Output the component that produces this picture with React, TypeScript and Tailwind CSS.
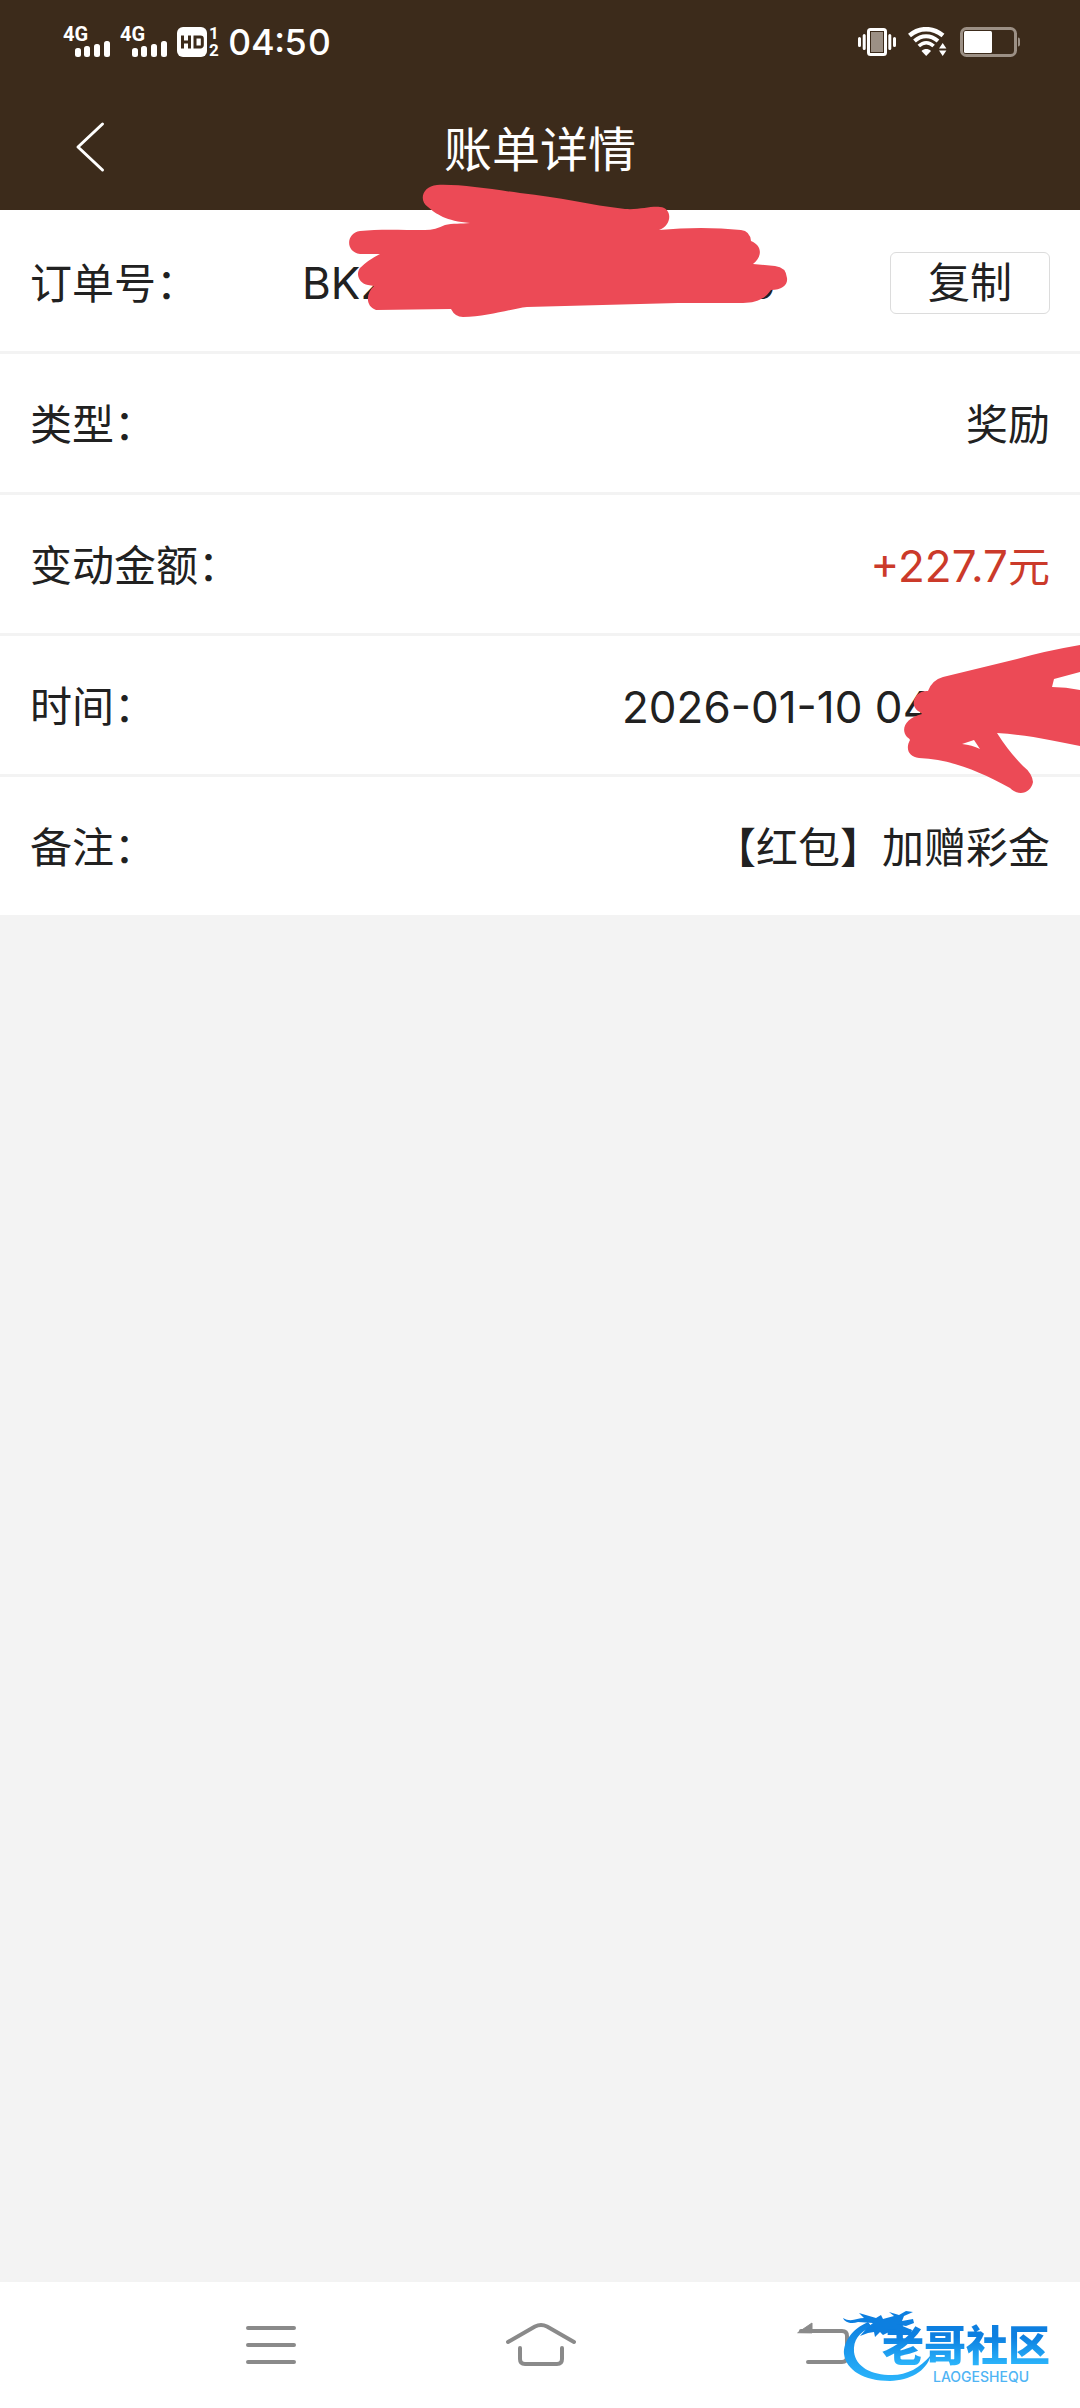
import React from "react";

function Signal() {
  return (
    <svg viewBox="0 -8 48 48" className="h-12 w-12" fill="#fff" aria-label="4G signal">
      <text x="0" y="15" fontFamily="Roboto, sans-serif" fontWeight="700" fontSize="20">
        4G
      </text>
      <rect x="12" y="22" width="6" height="9" rx="2.5" />
      <rect x="21" y="20" width="6" height="11" rx="2.5" />
      <rect x="31" y="18" width="6" height="13" rx="2.5" />
      <rect x="41" y="15" width="6" height="16" rx="2.5" />
    </svg>
  );
}

function HdBadge() {
  return (
    <svg viewBox="0 -8 44 48" className="h-12 w-11" aria-label="HD 1 2">
      <rect x="0" y="1" width="30" height="30" rx="6" fill="#fff" />
      <g fill="none" stroke="#3c2b1b" strokeWidth="3">
        <path d="M5.5 9.5v13M12.5 9.5v13M5.5 16h7" />
        <path d="M18 11h5.5a1.8 1.8 0 0 1 1.8 1.8v6.4a1.8 1.8 0 0 1-1.8 1.8H18z" />
      </g>
      <g fill="#fff" fontFamily="Roboto, sans-serif" fontWeight="700" fontSize="17">
        <text x="32" y="13">1</text>
        <text x="32" y="30">2</text>
      </g>
    </svg>
  );
}

function Vibrate() {
  return (
    <svg viewBox="0 0 38 30" className="h-[30px] w-[38px]" aria-label="Vibrate">
      <rect x="10.5" y="2.5" width="17" height="25" rx="2" fill="#9c9085" stroke="#fff" strokeWidth="3" />
      <rect x="12.5" y="4.5" width="13" height="21" fill="none" stroke="#3c2b1b" strokeWidth="1" />
      <g stroke="#fff" strokeWidth="3" strokeLinecap="round">
        <path d="M1.5 11.5v7M6.2 8.5v13M31.8 8.5v13M36.5 11.5v7" />
      </g>
    </svg>
  );
}

function Wifi() {
  return (
    <svg viewBox="0 0 40 30" className="h-[30px] w-10" fill="none" stroke="#fff" aria-label="Wi-Fi">
      <path d="M1.5 8.5C11.5 0 24.5 0 35 8.5" strokeWidth="4.5" />
      <path d="M6.5 14C13.5 7.6 22.5 7.6 30 14" strokeWidth="4" />
      <path d="M10.8 19C15.5 14.6 21 14.6 25.6 19" strokeWidth="3.6" />
      <path d="M13.5 24C16.5 21.4 20 21.4 23 24L18.2 29z" fill="#fff" stroke="none" />
      <path d="M31 21.5l3.7-5.5 3.7 5.5zM31 23.5l3.7 5.5 3.7-5.5z" fill="#fff" stroke="none" />
    </svg>
  );
}

function Battery() {
  return (
    <svg viewBox="0 0 60 30" className="h-[30px] w-[60px]" aria-label="Battery">
      <rect x="1.5" y="1.5" width="54" height="27" rx="5" fill="none" stroke="#9c9085" strokeWidth="3" />
      <path d="M58 10.5a2 2 0 0 1 2 2v5a2 2 0 0 1-2 2z" fill="#9c9085" />
      <rect x="4" y="4" width="28" height="22" rx="1.5" fill="#fff" />
    </svg>
  );
}

function Row({ label, children }: { label: string; children: React.ReactNode }) {
  return (
    <div className="flex h-[141px] items-center justify-between border-b-[3px] border-[#f3f3f3] px-[30px] pt-[3px]">
      <dt>{label}</dt>
      <dd>{children}</dd>
    </div>
  );
}

function Logo() {
  return (
    <div className="pointer-events-none absolute right-4 bottom-5 h-[88px] w-[222px]">
      <svg viewBox="0 0 222 88" className="absolute inset-0 h-full w-full" aria-hidden="true">
        <defs>
          <linearGradient id="ring" x1="0" y1="0" x2="0" y2="1">
            <stop offset="0" stopColor="#0d7fe0" />
            <stop offset="1" stopColor="#2bb4fb" />
          </linearGradient>
        </defs>
        <path
          fill="url(#ring)"
          d="M26 22C10 29 1 42 2 54C4 70 22 81 48 81C68 80 84 72 89 55C78 68 65 75 50 75C29 75 14 67 12 52C11 40 17 32 30 27z"
        />
        <path
          fill="#0d7fe0"
          d="M1 18C9 23 15 18 22 18L17 13L34 18L39 15L41 19L52 16L47 12L57 15L64 11L71 12L62 16L60 21L71 19L72 23L64 26L58 25L70 30L69 33L58 31L47 32L41 35L38 32L33 37L32 32L26 33L18 36L26 27L31 23L16 22C10 24 3 23 1 18z"
        />
      </svg>
      <div className="absolute top-[23px] left-[40px] flex flex-col">
        <span className="bg-gradient-to-b from-[#0d7fe0] from-30% to-[#2bb4fb] to-90% bg-clip-text text-[42px] leading-[46px] font-black whitespace-nowrap text-transparent">
          老哥社区
        </span>
        <span className="pl-[51px] text-[14px] leading-4 font-medium text-[#4fb4f4]">LAOGESHEQU</span>
      </div>
    </div>
  );
}

export default function App() {
  return (
    <div className="relative flex min-h-screen flex-col bg-[#f3f3f3] font-['Inter','Noto_Sans_CJK_SC',sans-serif] text-[42px] text-[#212121]">
      <header className="bg-[#3c2b1b] text-white">
        <div className="flex h-[84px] items-center justify-between pr-[60px] pl-[63px]">
          <div className="flex items-center">
            <div className="flex items-center gap-[9px]">
              <Signal />
              <Signal />
              <HdBadge />
            </div>
            <time className="ml-[7px] text-[36px] leading-[42px] font-medium tabular-nums">04:50</time>
          </div>
          <div className="flex items-center gap-3">
            <Vibrate />
            <Wifi />
            <Battery />
          </div>
        </div>
        <div className="grid h-[126px] grid-cols-[1fr_auto_1fr] items-center">
          <button type="button" aria-label="返回" className="ml-[75px] w-8">
            <svg viewBox="0 0 32 52" className="h-[52px] w-8" fill="none" stroke="#fff" strokeWidth="3" strokeLinecap="round" strokeLinejoin="round">
              <path d="M27.5 3L3 26l24.5 23" />
            </svg>
          </button>
          <h1 className="pt-[5px] text-[48px] leading-[60px]">账单详情</h1>
        </div>
      </header>

      <dl className="bg-white">
        <div className="flex h-36 items-center border-b-[3px] border-[#f3f3f3] px-[30px] pt-[5px]">
          <dt className="w-[272px]">订单号：</dt>
          <dd className="flex flex-1 items-center justify-between">
            <span className="flex w-[474px] justify-between text-[44px]">
              <span>BK2</span>
              <span>0</span>
            </span>
            <button type="button" className="h-[62px] w-40 rounded-md border border-[#dcdcdc] leading-[60px]">
              复制
            </button>
          </dd>
        </div>
        <Row label="类型：">奖励</Row>
        <Row label="变动金额：">
          <span className="text-[#cb3a2a]">
            <span className="text-[44px]">+227.7</span>元
          </span>
        </Row>
        <Row label="时间：">
          <span className="block w-[428px] text-[44px]">2026-01-10 04</span>
        </Row>
        <Row label="备注：">【红包】加赠彩金</Row>
      </dl>

      <main className="flex-1" />

      <nav className="relative h-[126px] bg-white px-[12.5%]">
        <div className="grid h-full grid-cols-3 place-items-center text-[#8a8a8a]">
          <button type="button" aria-label="最近任务">
            <svg viewBox="0 0 90 60" className="h-[60px] w-[90px]" fill="none" stroke="currentColor" strokeWidth="4" strokeLinecap="round">
              <path d="M23 13h46M23 30h46M23 47h46" />
            </svg>
          </button>
          <button type="button" aria-label="主页">
            <svg viewBox="0 0 90 60" className="h-[60px] w-[90px]" fill="none" stroke="currentColor" strokeWidth="4" strokeLinecap="round" strokeLinejoin="round">
              <path d="M13 27L40 11.5Q46 8.5 52 11.5L79 27" />
              <path d="M25 33v11q0 5 5 5h32q5 0 5-5V33" />
            </svg>
          </button>
          <button type="button" aria-label="返回上一页">
            <svg viewBox="0 0 90 60" className="h-[60px] w-[90px]" fill="none" stroke="currentColor" strokeWidth="4" strokeLinecap="round">
              <path d="M36 16h41q5 0 5 5v21q0 5-5 5H43" />
              <path d="M33 17.5L47 8v9.5z" fill="currentColor" strokeWidth="1" />
            </svg>
          </button>
        </div>
        <Logo />
      </nav>

      <svg viewBox="348 183 440 136" className="pointer-events-none absolute top-[183px] left-[348px] h-[136px] w-[440px]" fill="#ec4a56" aria-hidden="true">
        <path d="M437 185C423 186 418 200 428 207C436 214 446 221 470 223C462 224 452 223 445 225C439 228 432 230 425 230C400 230 378 229 360 231C346 233 345 252 360 254L380 254Q368 260 360 268C355 275 360 284 368 285L374 286C366 293 365 306 376 310L451 309Q455 317 463 317C487 317 510 309 527 307L678 303L743 303C756 303 765 299 771 290C782 290 788 285 787 278Q786 267 775 266L753 264C762 257 763 246 751 241Q750 231 741 230Q702 226 659 230C672 226 673 208 660 207C650 206 640 210 625 209C590 205 560 197 520 193C490 189 460 184 437 185z" />
      </svg>
      <svg viewBox="903 643 177 152" className="pointer-events-none absolute top-[643px] right-0 h-[152px] w-[177px]" fill="#ec4a56" aria-hidden="true">
        <path
          fillRule="evenodd"
          d="M1080 645Q1045 651 1017 659L943 677Q932 680 928 691C915 690 909 705 918 711Q921 712 922 714C906 718 900 729 907 737Q910 739 910 740C905 749 909 757 919 758C955 760 980 772 1010 788C1019 797 1031 793 1033 782Q1032 773 1023 766Q1009 752 997 733C1030 735 1055 741 1080 746V690Q1066 687 1052 687L1054 679L1080 672zM962 744L974 740L980 749Q972 745 962 744z"
        />
      </svg>
    </div>
  );
}
